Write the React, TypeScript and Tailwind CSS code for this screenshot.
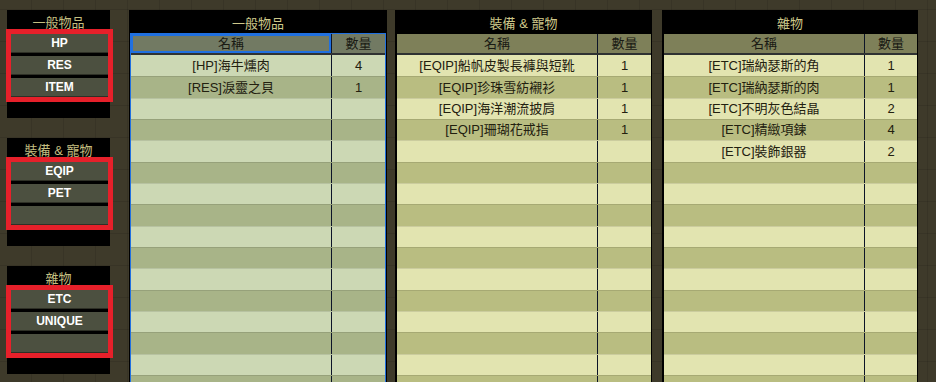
import React from 'react';

type Item = { name: string; qty: string };

interface Theme {
  head: string;
  light: string;
  dark: string;
}

const generalItems: Item[] = [
  { name: '[HP]海牛燻肉', qty: '4' },
  { name: '[RES]淚靈之貝', qty: '1' },
];

const equipItems: Item[] = [
  { name: '[EQIP]船帆皮製長褲與短靴', qty: '1' },
  { name: '[EQIP]珍珠雪紡襯衫', qty: '1' },
  { name: '[EQIP]海洋潮流披肩', qty: '1' },
  { name: '[EQIP]珊瑚花戒指', qty: '1' },
];

const etcItems: Item[] = [
  { name: '[ETC]瑞納瑟斯的角', qty: '1' },
  { name: '[ETC]瑞納瑟斯的肉', qty: '1' },
  { name: '[ETC]不明灰色結晶', qty: '2' },
  { name: '[ETC]精緻項鍊', qty: '4' },
  { name: '[ETC]裝飾銀器', qty: '2' },
];

const greenTheme: Theme = {
  head: 'bg-[#727a63]',
  light: 'bg-[#ccd8b4]',
  dark: 'bg-[#a8b488]',
};

const yellowTheme: Theme = {
  head: 'bg-[#7e8059]',
  light: 'bg-[#e2e4b0]',
  dark: 'bg-[#b9bd81]',
};

const ROW_COUNT = 16;

// Left side filter panel: title + three buttons wrapped in the red marker
const FilterGroup: React.FC<{ title: string; buttons: string[] }> = ({ title, buttons }) => (
  <div className="h-[108px] w-[103px] bg-black">
    <div className="h-[24px] pt-[5px] text-center text-[13px] leading-[15px] text-[#c4bf80]">{title}</div>
    <div className="ml-[4px] flex w-[97px] flex-col gap-[3px] outline-5 outline-[#e6202a]">
      {buttons.map((b, i) => (
        <div
          key={i}
          className="flex h-[19px] items-center justify-center border-b border-[#2e3026] bg-[#4c5040] text-[12px] font-bold text-white"
        >
          {b}
        </div>
      ))}
    </div>
  </div>
);

interface TableProps {
  title: string;
  items: Item[];
  theme: Theme;
  focused?: boolean;
  width: string;
}

const ItemTable: React.FC<TableProps> = ({ title, items, theme, focused, width }) => {
  const rows = Array.from({ length: ROW_COUNT }, (_, i) => items[i] ?? { name: '', qty: '' });
  return (
    <div className={`${width} h-[372px] shrink-0 overflow-hidden bg-black`}>
      {/* Title band */}
      <div className="h-[23px] pt-[6px] text-center text-[13px] leading-[15px] text-[#cec88a]">{title}</div>
      <div
        className={
          focused
            ? 'mx-[1px] border-x border-t border-[#2070e0]'
            : 'ml-[2px] mr-[1px] border-t border-black'
        }
      >
        {/* Column header */}
        <div className={`flex h-[19px] text-[13px] leading-[19px] text-[#1a1a14] ${theme.head}`}>
          <div
            className={`w-[200px] shrink-0 text-center ${
              focused ? 'shadow-[inset_0_0_0_2px_#2070e0]' : ''
            }`}
          >
            名稱
          </div>
          <div className="flex-1 border-l border-[#0c1428] text-center">數量</div>
        </div>
        <div className="h-[2px] bg-[#2f3232]" />
        {/* Rows */}
        {rows.map((r, i) => (
          <div
            key={i}
            className={`flex h-[21.33px] text-[13px] text-[#22200f] ${i % 2 === 0 ? theme.light : theme.dark} ${
              i > 0 ? 'border-t border-black/10' : ''
            }`}
          >
            <div className="flex w-[200px] shrink-0 items-center justify-center whitespace-nowrap">{r.name}</div>
            <div className="flex flex-1 items-center justify-center border-l border-[#0c1428]">{r.qty}</div>
          </div>
        ))}
      </div>
    </div>
  );
};

export default function App() {
  return (
    <div className="flex h-[382px] w-[936px] overflow-hidden bg-[#3e3a2a] bg-[linear-gradient(to_right,rgba(0,0,0,0.1)_1px,transparent_1px),linear-gradient(to_bottom,rgba(0,0,0,0.1)_1px,transparent_1px)] pl-[7px] pt-[10px] font-['Liberation_Sans','Noto_Sans_CJK_TC',sans-serif] [background-position:-1px_9px] [background-size:32px_32px]">
      <div className="flex w-[103px] shrink-0 flex-col gap-[20px]">
        <FilterGroup title="一般物品" buttons={['HP', 'RES', 'ITEM']} />
        <FilterGroup title="裝備 & 寵物" buttons={['EQIP', 'PET', '']} />
        <FilterGroup title="雜物" buttons={['ETC', 'UNIQUE', '']} />
      </div>
      <div className="ml-[19px] flex">
        <ItemTable title="一般物品" items={generalItems} theme={greenTheme} focused width="w-[258px]" />
        <div className="w-[8px] shrink-0" />
        <ItemTable title="裝備 & 寵物" items={equipItems} theme={yellowTheme} width="w-[257px]" />
        <div className="w-[10px] shrink-0" />
        <ItemTable title="雜物" items={etcItems} theme={yellowTheme} width="w-[256px]" />
      </div>
    </div>
  );
}
